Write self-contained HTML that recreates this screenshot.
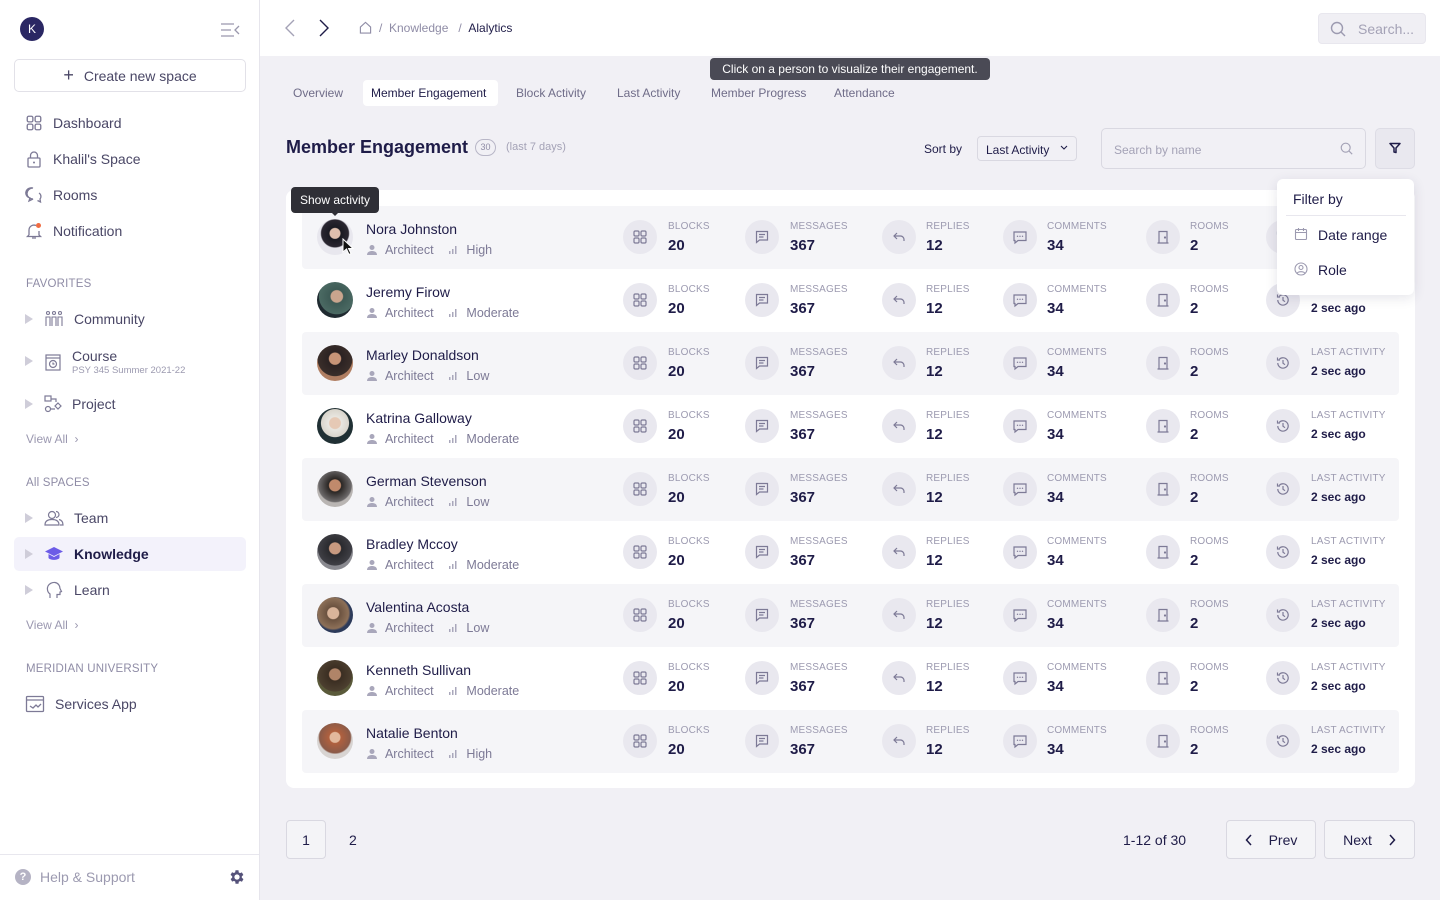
<!DOCTYPE html>
<html><head><meta charset="utf-8">
<style>
*{box-sizing:border-box;margin:0;padding:0}
body{width:1440px;height:900px;overflow:hidden;font-family:"Liberation Sans",sans-serif;background:#f1f0f5;color:#1f1c48;position:relative}
.abs{position:absolute}
#side{position:absolute;left:0;top:0;width:260px;height:900px;background:#fff;border-right:1px solid #e6e5ec}
.nav{position:absolute;left:25px;font-size:14px;color:#4a4766;display:flex;align-items:center}
.nav svg{margin-right:10px}
.sec{position:absolute;left:26px;font-size:11.5px;color:#8f8ca6;letter-spacing:.2px}
.tri{position:absolute;left:25px;width:0;height:0;border-left:8px solid #cfcdd9;border-top:5px solid transparent;border-bottom:5px solid transparent}
.va{position:absolute;left:26px;font-size:12px;color:#9b98b0}
#top{position:absolute;left:260px;top:0;width:1180px;height:56px;background:#fff}
.tab{position:absolute;top:86px;font-size:12px;color:#6f6c88}
#card{position:absolute;left:286px;top:190px;width:1129px;height:598px;background:#fff;border-radius:8px}
.row{position:absolute;left:16px;width:1097px;height:63px;border-radius:4px}
.g{background:#f5f5f8}
.av{position:absolute;left:15px;top:13px;width:36px;height:36px;border-radius:50%}
.nm{position:absolute;left:64px;top:15px;font-size:14px;color:#1f1c48;white-space:nowrap}
.sb{position:absolute;left:64px;top:37px;font-size:12.5px;color:#7d7a96;white-space:nowrap;display:flex;align-items:center}
.ci{position:absolute;top:14px;width:34px;height:34px;border-radius:50%;background:#e9e8ef;display:flex;align-items:center;justify-content:center}
.lb{position:absolute;top:15px;font-size:10px;color:#9c9ab0;letter-spacing:.2px}
.vl{position:absolute;top:31px;font-size:15px;font-weight:bold;color:#1f1c48}
.vs{position:absolute;top:32px;font-size:12px;font-weight:bold;color:#1f1c48}
.btn{position:absolute;border:1px solid #d9d8e1;border-radius:4px;background:#f4f4f7;font-size:14px;color:#1f1c48;display:flex;align-items:center;justify-content:center}
</style></head><body>
<svg width="0" height="0" style="position:absolute">
<defs>
<symbol id="grid" viewBox="0 0 16 16"><g fill="none" stroke="#7d7a96" stroke-width="1.2"><rect x="2" y="2" width="5" height="5" rx="1.3"/><rect x="9" y="2" width="5" height="5" rx="1.3"/><rect x="2" y="9" width="5" height="5" rx="1.3"/><rect x="9" y="9" width="5" height="5" rx="1.3"/></g></symbol>
<symbol id="msg" viewBox="0 0 16 16"><g fill="none" stroke="#7d7a96" stroke-width="1.2"><path d="M2.5 2.5h11v8.5h-8l-3 2.5z"/><path d="M5 5.5h6M5 8h4.5"/></g></symbol>
<symbol id="rep" viewBox="0 0 16 16"><g fill="none" stroke="#7d7a96" stroke-width="1.2"><path d="M6 4L3 7l3 3"/><path d="M3 7h6.5a3.5 3.5 0 0 1 3.5 3.5V12"/></g></symbol>
<symbol id="com" viewBox="0 0 16 16"><g fill="none" stroke="#7d7a96" stroke-width="1.2"><path d="M2 3h12v8.5H6l-3 2.5V11.5H2z"/></g><g fill="#7d7a96"><circle cx="5.5" cy="7.3" r=".7"/><circle cx="8" cy="7.3" r=".7"/><circle cx="10.5" cy="7.3" r=".7"/></g></symbol>
<symbol id="door" viewBox="0 0 16 16"><g fill="none" stroke="#7d7a96" stroke-width="1.2"><path d="M4 14V2.5h8V14M2.5 14h11"/><circle cx="10" cy="8.5" r=".5" fill="#7d7a96"/></g></symbol>
<symbol id="hist" viewBox="0 0 16 16"><g fill="none" stroke="#7d7a96" stroke-width="1.2"><path d="M2.8 8a5.2 5.2 0 1 0 1.5-3.7"/><path d="M2.5 2.5v2.5h2.5"/><path d="M8 5v3.2l2 1.5"/></g></symbol>
<symbol id="usr" viewBox="0 0 12 12"><circle cx="6" cy="3.5" r="2.5" fill="#a9a7bb"/><path d="M1 11c0-3 2.5-4 5-4s5 1 5 4z" fill="#a9a7bb"/></symbol>
<symbol id="bar" viewBox="0 0 12 12"><g fill="#a9a7bb"><rect x="2" y="7" width="1.5" height="3"/><rect x="5" y="5" width="1.5" height="5"/><rect x="8" y="2" width="1.5" height="8"/></g></symbol>
</defs></svg>

<!-- SIDEBAR -->
<div id="side">
<div class="abs" style="left:20px;top:17px;width:24px;height:24px;border-radius:50%;background:#2a2763;color:#fff;font-size:12px;display:flex;align-items:center;justify-content:center">K</div>
<svg class="abs" style="left:220px;top:22px" width="20" height="16" viewBox="0 0 20 16"><g stroke="#9a98ad" stroke-width="1.3" fill="none"><path d="M1 2h13M1 8h10M1 14h13M19 4l-4 4 4 4"/></g></svg>
<div class="abs" style="left:14px;top:59px;width:232px;height:33px;border:1px solid #e2e1e8;border-radius:5px;display:flex;align-items:center;justify-content:center;font-size:14px;color:#4a4766"><span style="font-size:18px;margin-right:10px;font-weight:300">+</span>Create new space</div>
<div class="nav" style="top:114px"><svg width="18" height="18" viewBox="0 0 16 16"><use href="#grid"/></svg>Dashboard</div>
<div class="nav" style="top:150px"><svg width="18" height="18" viewBox="0 0 18 18"><g fill="none" stroke="#7d7a96" stroke-width="1.3"><rect x="3" y="8" width="12" height="9" rx="1"/><path d="M5.5 8V5.5a3.5 3.5 0 0 1 7 0V8"/></g><circle cx="9" cy="12.5" r="1" fill="#7d7a96"/></svg>Khalil's Space</div>
<div class="nav" style="top:186px"><svg width="18" height="18" viewBox="0 0 18 18"><g fill="none" stroke="#7d7a96" stroke-width="1.3"><path d="M8 2a6 5.5 0 1 0 0 11h0l-4 2 1-3A5.5 5 0 0 1 8 2z"/><path d="M14 7a4 4 0 0 1 1 6l.5 3-3-1.5"/></g></svg>Rooms</div>
<div class="nav" style="top:222px"><svg width="18" height="18" viewBox="0 0 18 18"><g fill="none" stroke="#7d7a96" stroke-width="1.3"><path d="M4 13V8a5 5 0 0 1 7-4.5M14 9v4l1.5 1.5h-13L4 13M7 16h4"/></g><circle cx="13.5" cy="3.5" r="2.5" fill="#f06c42"/></svg>Notification</div>
<div class="sec" style="top:278px">FAVORITES</div>
<div class="tri" style="top:314px"></div>
<div class="nav" style="top:310px;left:44px"><svg width="20" height="18" viewBox="0 0 20 18"><g fill="none" stroke="#7d7a96" stroke-width="1.1"><circle cx="4" cy="3" r="1.5"/><circle cx="10" cy="3" r="1.5"/><circle cx="16" cy="3" r="1.5"/><path d="M2 16V7h4v9M8 16V7h4v9M14 16V7h4v9"/></g></svg>Community</div>
<div class="tri" style="top:356px"></div>
<div class="nav" style="top:348px;left:44px;align-items:flex-start"><svg width="18" height="18" viewBox="0 0 18 18" style="margin-top:5px"><g fill="none" stroke="#7d7a96" stroke-width="1.2"><rect x="2" y="2" width="14" height="15"/><path d="M2 5h14"/><circle cx="9" cy="11" r="3.5"/><path d="M9 9.5V11h1.5"/></g></svg><div>Course<div style="font-size:9.5px;color:#9c9ab0;margin-top:1px">PSY 345 Summer 2021-22</div></div></div>
<div class="tri" style="top:399px"></div>
<div class="nav" style="top:395px;left:44px"><svg width="18" height="18" viewBox="0 0 18 18"><g fill="none" stroke="#7d7a96" stroke-width="1.2"><rect x="1" y="1" width="6" height="5"/><circle cx="4" cy="14" r="2.5"/><path d="M7 4h5v3M7 14h4M14 8l3 3-3 3-3-3z"/></g></svg>Project</div>
<div class="va" style="top:432px">View All &nbsp;›</div>
<div class="sec" style="top:477px">All SPACES</div>
<div class="tri" style="top:513px"></div>
<div class="nav" style="top:509px;left:44px"><svg width="20" height="18" viewBox="0 0 20 18"><g fill="none" stroke="#7d7a96" stroke-width="1.2"><circle cx="8" cy="6" r="3.5"/><path d="M1 16c0-4 3-5.5 7-5.5s7 1.5 7 5.5z"/><path d="M12 2.5a3 3 0 0 1 0 6M15 10.5c2 .5 4 2 4 5.5h-3"/></g></svg>Team</div>
<div class="abs" style="left:14px;top:537px;width:232px;height:34px;background:#f3f2fb;border-radius:5px"></div>
<div class="tri" style="top:549px"></div>
<div class="nav" style="top:545px;left:44px;color:#1f1c48;font-weight:bold"><svg width="20" height="18" viewBox="0 0 20 18"><path d="M10 2L1 6.5l9 4.5 9-4.5z" fill="#6c5ce7"/><path d="M4.5 9v4c2 2.5 9 2.5 11 0V9l-5.5 3z" fill="#6c5ce7"/></svg>Knowledge</div>
<div class="tri" style="top:585px"></div>
<div class="nav" style="top:581px;left:44px"><svg width="20" height="18" viewBox="0 0 20 18"><path d="M6 17v-4C3 11 3 7 4 5s4-4 7-3.5 5 3 5 6l1.5 3-1.5.5v2.5h-3V17" fill="none" stroke="#7d7a96" stroke-width="1.2"/></svg>Learn</div>
<div class="va" style="top:618px">View All &nbsp;›</div>
<div class="sec" style="top:663px">MERIDIAN UNIVERSITY</div>
<div class="nav" style="top:695px"><svg width="20" height="18" viewBox="0 0 20 18"><g fill="none" stroke="#7d7a96" stroke-width="1.3"><rect x="1.5" y="1.5" width="17" height="15" rx="1"/><path d="M1.5 5h17M5 11l3 2 3-3 2 2 3-3"/></g></svg>Services App</div>
<div class="abs" style="left:0;top:854px;width:259px;border-top:1px solid #e8e7ee"></div>
<div class="abs" style="left:15px;top:869px;width:16px;height:16px;border-radius:50%;background:#b5b3c4;color:#fff;font-size:11px;font-weight:bold;text-align:center;line-height:16px">?</div>
<div class="abs" style="left:40px;top:869px;font-size:14px;color:#9c9ab0">Help &amp; Support</div>
<svg class="abs" style="left:228px;top:868px" width="18" height="18" viewBox="0 0 24 24"><path fill="#55527a" d="M19.4 13a7.5 7.5 0 0 0 0-2l2.1-1.6-2-3.5-2.5 1a7 7 0 0 0-1.7-1L15 3h-4l-.4 2.7a7 7 0 0 0-1.7 1l-2.5-1-2 3.5L6.6 11a7.5 7.5 0 0 0 0 2l-2.1 1.6 2 3.5 2.5-1a7 7 0 0 0 1.7 1L11 21h4l.4-2.7a7 7 0 0 0 1.7-1l2.5 1 2-3.5zM13 15.5a3.5 3.5 0 1 1 0-7 3.5 3.5 0 0 1 0 7z" transform="translate(-1 0)"/></svg>
</div>

<!-- TOP BAR -->
<div id="top">
<svg class="abs" style="left:24px;top:19px" width="12" height="18" viewBox="0 0 12 18"><path d="M10 1L2 9l8 8" fill="none" stroke="#a4a2b6" stroke-width="1.4"/></svg>
<svg class="abs" style="left:58px;top:19px" width="12" height="18" viewBox="0 0 12 18"><path d="M2 1l8 8-8 8" fill="none" stroke="#1f1c48" stroke-width="1.4"/></svg>
<svg class="abs" style="left:99px;top:21px" width="13" height="13" viewBox="0 0 14 14"><path d="M1.5 6.5L7 1.5l5.5 5V13h-11z" fill="none" stroke="#8f8ca6" stroke-width="1.2"/></svg>
<div class="abs" style="left:119px;top:21px;font-size:12px;color:#8f8ca6">/ &nbsp;Knowledge &nbsp; / &nbsp;<span style="color:#1f1c48">Alalytics</span></div>
<div class="abs" style="left:1058px;top:13px;width:108px;height:31px;background:#f0eff4;border-radius:4px;border:1px solid #e8e7ee"></div>
<svg class="abs" style="left:1070px;top:21px" width="16" height="16" viewBox="0 0 16 16"><g fill="none" stroke="#9c9ab0" stroke-width="1.4"><circle cx="7" cy="7" r="5.5"/><path d="M11 11l4 4"/></g></svg>
<div class="abs" style="left:1098px;top:21px;font-size:14px;color:#a4a2b6">Search...</div>
</div>

<!-- TOOLTIP TOP -->
<div class="abs" style="left:710px;top:58px;width:280px;height:22px;background:#4a4a55;border-radius:4px;color:#fff;font-size:12px;text-align:center;line-height:22px">Click on a person to visualize their engagement.</div>

<!-- TABS -->
<div class="tab" style="left:293px">Overview</div>
<div class="abs" style="left:363px;top:80px;width:135px;height:26px;background:#fff;border-radius:4px"></div>
<div class="tab" style="left:371px;color:#1f1c48">Member Engagement</div>
<div class="tab" style="left:516px">Block Activity</div>
<div class="tab" style="left:617px">Last Activity</div>
<div class="tab" style="left:711px">Member Progress</div>
<div class="tab" style="left:834px">Attendance</div>

<div class="abs" style="left:286px;top:137px;font-size:18px;font-weight:bold;color:#1f1c48">Member Engagement</div>
<div class="abs" style="left:475px;top:139px;width:21px;height:17px;border:1px solid #b8b6c7;border-radius:9px;font-size:9px;color:#8f8ca6;text-align:center;line-height:15px">30</div>
<div class="abs" style="left:506px;top:141px;font-size:11px;color:#a4a2b6">(last 7 days)</div>
<div class="abs" style="left:924px;top:142px;font-size:12px;color:#1f1c48">Sort by</div>
<div class="abs" style="left:977px;top:136px;width:100px;height:25px;border:1px solid #d9d8e1;border-radius:4px;font-size:12px;color:#1f1c48;padding:6px 0 0 8px">Last Activity</div>
<svg class="abs" style="left:1060px;top:145px" width="8" height="6" viewBox="0 0 8 6"><path d="M1 1l3 3 3-3" fill="none" stroke="#1f1c48" stroke-width="1.1"/></svg>
<div class="abs" style="left:1101px;top:128px;width:265px;height:41px;border:1px solid #d9d8e1;border-radius:5px;font-size:12px;color:#a4a2b6;padding:14px 0 0 12px">Search by name</div>
<svg class="abs" style="left:1340px;top:142px" width="13" height="13" viewBox="0 0 16 16"><g fill="none" stroke="#a4a2b6" stroke-width="1.4"><circle cx="7" cy="7" r="5.5"/><path d="M11 11l4 4"/></g></svg>
<div class="abs" style="left:1375px;top:128px;width:40px;height:41px;background:#e9e8ef;border:1px solid #dddce5;border-radius:5px"></div>
<svg class="abs" style="left:1389px;top:142px" width="12" height="12" viewBox="0 0 12 12"><path d="M1 1.5h10L7 6v4.5L5 10V6z" fill="none" stroke="#1f1c48" stroke-width="1.5" stroke-linejoin="round"/></svg>

<!-- CARD -->
<div id="card">
<div class="row g" style="top:16px"><div class="av" style="background:radial-gradient(circle at 50% 40%,#e0bfae 0 18%,#1a1a22 21%,#2a2630 48%,#e8e7ee 52%)"></div><div class="nm">Nora Johnston</div><div class="sb"><svg width="12" height="12"><use href="#usr"/></svg>&nbsp;&nbsp;Architect&nbsp;&nbsp;&nbsp;&nbsp;<svg width="12" height="12"><use href="#bar"/></svg>&nbsp;&nbsp;High</div>
<div class="ci" style="left:321px"><svg width="16" height="16"><use href="#grid"/></svg></div><div class="lb" style="left:366px">BLOCKS</div><div class="vl" style="left:366px">20</div>
<div class="ci" style="left:443px"><svg width="16" height="16"><use href="#msg"/></svg></div><div class="lb" style="left:488px">MESSAGES</div><div class="vl" style="left:488px">367</div>
<div class="ci" style="left:580px"><svg width="16" height="16"><use href="#rep"/></svg></div><div class="lb" style="left:624px">REPLIES</div><div class="vl" style="left:624px">12</div>
<div class="ci" style="left:701px"><svg width="16" height="16"><use href="#com"/></svg></div><div class="lb" style="left:745px">COMMENTS</div><div class="vl" style="left:745px">34</div>
<div class="ci" style="left:844px"><svg width="16" height="16"><use href="#door"/></svg></div><div class="lb" style="left:888px">ROOMS</div><div class="vl" style="left:888px">2</div>
<div class="ci" style="left:964px"><svg width="16" height="16"><use href="#hist"/></svg></div><div class="lb" style="left:1009px">LAST ACTIVITY</div><div class="vs" style="left:1009px">2 sec ago</div></div>

<div class="row" style="top:79px"><div class="av" style="background:radial-gradient(circle at 55% 40%,#c9a58e 0 20%,#3d5a55 23%,#4b6a63 60%,#1f2a30 62%)"></div><div class="nm">Jeremy Firow</div><div class="sb"><svg width="12" height="12"><use href="#usr"/></svg>&nbsp;&nbsp;Architect&nbsp;&nbsp;&nbsp;&nbsp;<svg width="12" height="12"><use href="#bar"/></svg>&nbsp;&nbsp;Moderate</div>
<div class="ci" style="left:321px"><svg width="16" height="16"><use href="#grid"/></svg></div><div class="lb" style="left:366px">BLOCKS</div><div class="vl" style="left:366px">20</div>
<div class="ci" style="left:443px"><svg width="16" height="16"><use href="#msg"/></svg></div><div class="lb" style="left:488px">MESSAGES</div><div class="vl" style="left:488px">367</div>
<div class="ci" style="left:580px"><svg width="16" height="16"><use href="#rep"/></svg></div><div class="lb" style="left:624px">REPLIES</div><div class="vl" style="left:624px">12</div>
<div class="ci" style="left:701px"><svg width="16" height="16"><use href="#com"/></svg></div><div class="lb" style="left:745px">COMMENTS</div><div class="vl" style="left:745px">34</div>
<div class="ci" style="left:844px"><svg width="16" height="16"><use href="#door"/></svg></div><div class="lb" style="left:888px">ROOMS</div><div class="vl" style="left:888px">2</div>
<div class="ci" style="left:964px"><svg width="16" height="16"><use href="#hist"/></svg></div><div class="lb" style="left:1009px">LAST ACTIVITY</div><div class="vs" style="left:1009px">2 sec ago</div></div>

<div class="row g" style="top:142px"><div class="av" style="background:radial-gradient(circle at 50% 38%,#c79477 0 20%,#2b2222 23%,#3a2e2a 60%,#b07e62 62%)"></div><div class="nm">Marley Donaldson</div><div class="sb"><svg width="12" height="12"><use href="#usr"/></svg>&nbsp;&nbsp;Architect&nbsp;&nbsp;&nbsp;&nbsp;<svg width="12" height="12"><use href="#bar"/></svg>&nbsp;&nbsp;Low</div>
<div class="ci" style="left:321px"><svg width="16" height="16"><use href="#grid"/></svg></div><div class="lb" style="left:366px">BLOCKS</div><div class="vl" style="left:366px">20</div>
<div class="ci" style="left:443px"><svg width="16" height="16"><use href="#msg"/></svg></div><div class="lb" style="left:488px">MESSAGES</div><div class="vl" style="left:488px">367</div>
<div class="ci" style="left:580px"><svg width="16" height="16"><use href="#rep"/></svg></div><div class="lb" style="left:624px">REPLIES</div><div class="vl" style="left:624px">12</div>
<div class="ci" style="left:701px"><svg width="16" height="16"><use href="#com"/></svg></div><div class="lb" style="left:745px">COMMENTS</div><div class="vl" style="left:745px">34</div>
<div class="ci" style="left:844px"><svg width="16" height="16"><use href="#door"/></svg></div><div class="lb" style="left:888px">ROOMS</div><div class="vl" style="left:888px">2</div>
<div class="ci" style="left:964px"><svg width="16" height="16"><use href="#hist"/></svg></div><div class="lb" style="left:1009px">LAST ACTIVITY</div><div class="vs" style="left:1009px">2 sec ago</div></div>

<div class="row" style="top:205px"><div class="av" style="background:radial-gradient(circle at 50% 42%,#e6c9b5 0 20%,#e8e6e0 23%,#d9d5cc 50%,#203034 52%)"></div><div class="nm">Katrina Galloway</div><div class="sb"><svg width="12" height="12"><use href="#usr"/></svg>&nbsp;&nbsp;Architect&nbsp;&nbsp;&nbsp;&nbsp;<svg width="12" height="12"><use href="#bar"/></svg>&nbsp;&nbsp;Moderate</div>
<div class="ci" style="left:321px"><svg width="16" height="16"><use href="#grid"/></svg></div><div class="lb" style="left:366px">BLOCKS</div><div class="vl" style="left:366px">20</div>
<div class="ci" style="left:443px"><svg width="16" height="16"><use href="#msg"/></svg></div><div class="lb" style="left:488px">MESSAGES</div><div class="vl" style="left:488px">367</div>
<div class="ci" style="left:580px"><svg width="16" height="16"><use href="#rep"/></svg></div><div class="lb" style="left:624px">REPLIES</div><div class="vl" style="left:624px">12</div>
<div class="ci" style="left:701px"><svg width="16" height="16"><use href="#com"/></svg></div><div class="lb" style="left:745px">COMMENTS</div><div class="vl" style="left:745px">34</div>
<div class="ci" style="left:844px"><svg width="16" height="16"><use href="#door"/></svg></div><div class="lb" style="left:888px">ROOMS</div><div class="vl" style="left:888px">2</div>
<div class="ci" style="left:964px"><svg width="16" height="16"><use href="#hist"/></svg></div><div class="lb" style="left:1009px">LAST ACTIVITY</div><div class="vs" style="left:1009px">2 sec ago</div></div>

<div class="row g" style="top:268px"><div class="av" style="background:radial-gradient(circle at 50% 40%,#c08a6c 0 20%,#2a2624 23%,#6d6a6b 58%,#b9b5b3 62%)"></div><div class="nm">German Stevenson</div><div class="sb"><svg width="12" height="12"><use href="#usr"/></svg>&nbsp;&nbsp;Architect&nbsp;&nbsp;&nbsp;&nbsp;<svg width="12" height="12"><use href="#bar"/></svg>&nbsp;&nbsp;Low</div>
<div class="ci" style="left:321px"><svg width="16" height="16"><use href="#grid"/></svg></div><div class="lb" style="left:366px">BLOCKS</div><div class="vl" style="left:366px">20</div>
<div class="ci" style="left:443px"><svg width="16" height="16"><use href="#msg"/></svg></div><div class="lb" style="left:488px">MESSAGES</div><div class="vl" style="left:488px">367</div>
<div class="ci" style="left:580px"><svg width="16" height="16"><use href="#rep"/></svg></div><div class="lb" style="left:624px">REPLIES</div><div class="vl" style="left:624px">12</div>
<div class="ci" style="left:701px"><svg width="16" height="16"><use href="#com"/></svg></div><div class="lb" style="left:745px">COMMENTS</div><div class="vl" style="left:745px">34</div>
<div class="ci" style="left:844px"><svg width="16" height="16"><use href="#door"/></svg></div><div class="lb" style="left:888px">ROOMS</div><div class="vl" style="left:888px">2</div>
<div class="ci" style="left:964px"><svg width="16" height="16"><use href="#hist"/></svg></div><div class="lb" style="left:1009px">LAST ACTIVITY</div><div class="vs" style="left:1009px">2 sec ago</div></div>

<div class="row" style="top:331px"><div class="av" style="background:radial-gradient(circle at 50% 40%,#c89a80 0 20%,#2a2a2e 23%,#3f3f45 60%,#8a8a90 62%)"></div><div class="nm">Bradley Mccoy</div><div class="sb"><svg width="12" height="12"><use href="#usr"/></svg>&nbsp;&nbsp;Architect&nbsp;&nbsp;&nbsp;&nbsp;<svg width="12" height="12"><use href="#bar"/></svg>&nbsp;&nbsp;Moderate</div>
<div class="ci" style="left:321px"><svg width="16" height="16"><use href="#grid"/></svg></div><div class="lb" style="left:366px">BLOCKS</div><div class="vl" style="left:366px">20</div>
<div class="ci" style="left:443px"><svg width="16" height="16"><use href="#msg"/></svg></div><div class="lb" style="left:488px">MESSAGES</div><div class="vl" style="left:488px">367</div>
<div class="ci" style="left:580px"><svg width="16" height="16"><use href="#rep"/></svg></div><div class="lb" style="left:624px">REPLIES</div><div class="vl" style="left:624px">12</div>
<div class="ci" style="left:701px"><svg width="16" height="16"><use href="#com"/></svg></div><div class="lb" style="left:745px">COMMENTS</div><div class="vl" style="left:745px">34</div>
<div class="ci" style="left:844px"><svg width="16" height="16"><use href="#door"/></svg></div><div class="lb" style="left:888px">ROOMS</div><div class="vl" style="left:888px">2</div>
<div class="ci" style="left:964px"><svg width="16" height="16"><use href="#hist"/></svg></div><div class="lb" style="left:1009px">LAST ACTIVITY</div><div class="vs" style="left:1009px">2 sec ago</div></div>

<div class="row g" style="top:394px"><div class="av" style="background:radial-gradient(circle at 45% 45%,#d9b49a 0 20%,#6b5240 23%,#8d7058 55%,#2c3a5a 62%)"></div><div class="nm">Valentina Acosta</div><div class="sb"><svg width="12" height="12"><use href="#usr"/></svg>&nbsp;&nbsp;Architect&nbsp;&nbsp;&nbsp;&nbsp;<svg width="12" height="12"><use href="#bar"/></svg>&nbsp;&nbsp;Low</div>
<div class="ci" style="left:321px"><svg width="16" height="16"><use href="#grid"/></svg></div><div class="lb" style="left:366px">BLOCKS</div><div class="vl" style="left:366px">20</div>
<div class="ci" style="left:443px"><svg width="16" height="16"><use href="#msg"/></svg></div><div class="lb" style="left:488px">MESSAGES</div><div class="vl" style="left:488px">367</div>
<div class="ci" style="left:580px"><svg width="16" height="16"><use href="#rep"/></svg></div><div class="lb" style="left:624px">REPLIES</div><div class="vl" style="left:624px">12</div>
<div class="ci" style="left:701px"><svg width="16" height="16"><use href="#com"/></svg></div><div class="lb" style="left:745px">COMMENTS</div><div class="vl" style="left:745px">34</div>
<div class="ci" style="left:844px"><svg width="16" height="16"><use href="#door"/></svg></div><div class="lb" style="left:888px">ROOMS</div><div class="vl" style="left:888px">2</div>
<div class="ci" style="left:964px"><svg width="16" height="16"><use href="#hist"/></svg></div><div class="lb" style="left:1009px">LAST ACTIVITY</div><div class="vs" style="left:1009px">2 sec ago</div></div>

<div class="row" style="top:457px"><div class="av" style="background:radial-gradient(circle at 50% 40%,#b08468 0 20%,#3b2e22 23%,#4d4030 60%,#5a5a3a 62%)"></div><div class="nm">Kenneth Sullivan</div><div class="sb"><svg width="12" height="12"><use href="#usr"/></svg>&nbsp;&nbsp;Architect&nbsp;&nbsp;&nbsp;&nbsp;<svg width="12" height="12"><use href="#bar"/></svg>&nbsp;&nbsp;Moderate</div>
<div class="ci" style="left:321px"><svg width="16" height="16"><use href="#grid"/></svg></div><div class="lb" style="left:366px">BLOCKS</div><div class="vl" style="left:366px">20</div>
<div class="ci" style="left:443px"><svg width="16" height="16"><use href="#msg"/></svg></div><div class="lb" style="left:488px">MESSAGES</div><div class="vl" style="left:488px">367</div>
<div class="ci" style="left:580px"><svg width="16" height="16"><use href="#rep"/></svg></div><div class="lb" style="left:624px">REPLIES</div><div class="vl" style="left:624px">12</div>
<div class="ci" style="left:701px"><svg width="16" height="16"><use href="#com"/></svg></div><div class="lb" style="left:745px">COMMENTS</div><div class="vl" style="left:745px">34</div>
<div class="ci" style="left:844px"><svg width="16" height="16"><use href="#door"/></svg></div><div class="lb" style="left:888px">ROOMS</div><div class="vl" style="left:888px">2</div>
<div class="ci" style="left:964px"><svg width="16" height="16"><use href="#hist"/></svg></div><div class="lb" style="left:1009px">LAST ACTIVITY</div><div class="vs" style="left:1009px">2 sec ago</div></div>

<div class="row g" style="top:520px"><div class="av" style="background:radial-gradient(circle at 50% 40%,#e2b89c 0 18%,#b0603e 21%,#8a5a48 55%,#d8d4d2 60%)"></div><div class="nm">Natalie Benton</div><div class="sb"><svg width="12" height="12"><use href="#usr"/></svg>&nbsp;&nbsp;Architect&nbsp;&nbsp;&nbsp;&nbsp;<svg width="12" height="12"><use href="#bar"/></svg>&nbsp;&nbsp;High</div>
<div class="ci" style="left:321px"><svg width="16" height="16"><use href="#grid"/></svg></div><div class="lb" style="left:366px">BLOCKS</div><div class="vl" style="left:366px">20</div>
<div class="ci" style="left:443px"><svg width="16" height="16"><use href="#msg"/></svg></div><div class="lb" style="left:488px">MESSAGES</div><div class="vl" style="left:488px">367</div>
<div class="ci" style="left:580px"><svg width="16" height="16"><use href="#rep"/></svg></div><div class="lb" style="left:624px">REPLIES</div><div class="vl" style="left:624px">12</div>
<div class="ci" style="left:701px"><svg width="16" height="16"><use href="#com"/></svg></div><div class="lb" style="left:745px">COMMENTS</div><div class="vl" style="left:745px">34</div>
<div class="ci" style="left:844px"><svg width="16" height="16"><use href="#door"/></svg></div><div class="lb" style="left:888px">ROOMS</div><div class="vl" style="left:888px">2</div>
<div class="ci" style="left:964px"><svg width="16" height="16"><use href="#hist"/></svg></div><div class="lb" style="left:1009px">LAST ACTIVITY</div><div class="vs" style="left:1009px">2 sec ago</div></div>
</div>

<!-- Show activity tooltip -->
<div class="abs" style="left:291px;top:187px;width:88px;height:26px;background:#2f2f36;border-radius:4px;color:#fff;font-size:12px;text-align:center;line-height:26px">Show activity</div>
<div class="abs" style="left:331px;top:212px;width:0;height:0;border-left:4px solid transparent;border-right:4px solid transparent;border-top:4px solid #2f2f36"></div>
<svg class="abs" style="left:342px;top:238px" width="12" height="18" viewBox="0 0 12 18"><path d="M1 1v13l3.5-3 2.5 5.5 2-1-2.5-5H11z" fill="#111" stroke="#fff" stroke-width="1"/></svg>

<!-- Filter dropdown -->
<div class="abs" style="left:1277px;top:179px;width:137px;height:116px;background:#fff;border-radius:6px;box-shadow:0 3px 12px rgba(40,40,80,.12)">
<div class="abs" style="left:16px;top:12px;font-size:14px;color:#1f1c48">Filter by</div>
<div class="abs" style="left:9px;top:36px;width:120px;border-top:1px solid #e8e7ee"></div>
<svg class="abs" style="left:17px;top:48px" width="14" height="14" viewBox="0 0 14 14"><g fill="none" stroke="#9c9ab0" stroke-width="1.1"><rect x="1.5" y="2.5" width="11" height="10" rx="1"/><path d="M1.5 5.5h11M4.5 1v3M9.5 1v3"/></g></svg>
<div class="abs" style="left:41px;top:48px;font-size:14px;color:#1f1c48">Date range</div>
<svg class="abs" style="left:17px;top:83px" width="14" height="14" viewBox="0 0 14 14"><g fill="none" stroke="#9c9ab0" stroke-width="1.1"><circle cx="7" cy="7" r="6"/><circle cx="7" cy="5.5" r="2"/><path d="M3.3 11.2c1-2 6.4-2 7.4 0"/></g></svg>
<div class="abs" style="left:41px;top:83px;font-size:14px;color:#1f1c48">Role</div>
</div>

<!-- Pagination -->
<div class="btn" style="left:286px;top:820px;width:40px;height:39px">1</div>
<div class="abs" style="left:349px;top:832px;font-size:14px;color:#1f1c48">2</div>
<div class="abs" style="left:1123px;top:832px;font-size:14px;color:#1f1c48">1-12 of 30</div>
<div class="btn" style="left:1226px;top:820px;width:90px;height:39px"><svg width="8" height="12" viewBox="0 0 8 12" style="margin-right:16px"><path d="M6 1L1.5 6 6 11" fill="none" stroke="#1f1c48" stroke-width="1.5"/></svg>Prev</div>
<div class="btn" style="left:1324px;top:820px;width:91px;height:39px">Next<svg width="8" height="12" viewBox="0 0 8 12" style="margin-left:16px"><path d="M2 1l4.5 5L2 11" fill="none" stroke="#1f1c48" stroke-width="1.5"/></svg></div>
</body></html>
